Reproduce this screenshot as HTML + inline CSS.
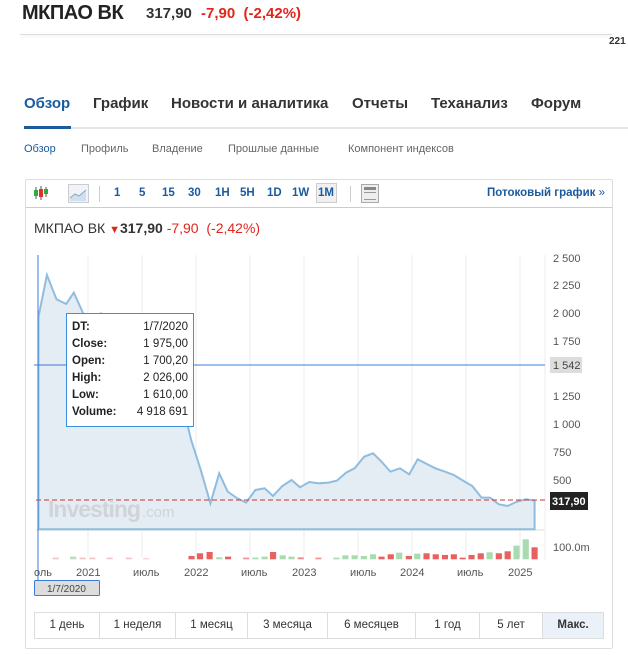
<!DOCTYPE html>
<html><head><meta charset="utf-8"><style>
*{margin:0;padding:0;box-sizing:border-box}
body{width:628px;height:655px;background:#fff;font-family:"Liberation Sans",sans-serif;position:relative;overflow:hidden;color:#222}
.a{position:absolute;white-space:nowrap}
</style></head><body>
<div class="a" style="left:22px;top:2px;font-size:20px;font-weight:bold;color:#222;letter-spacing:-0.5px">МКПАО ВК</div>
<div class="a" style="left:146px;top:5px;font-size:15px;font-weight:bold;color:#333">317,90</div>
<div class="a" style="left:201px;top:5px;font-size:15px;font-weight:bold;color:#e0251b">-7,90&nbsp; (-2,42%)</div>
<div class="a" style="left:20px;top:34px;width:592px;height:1px;background:#ddd;box-shadow:0 1px 3px rgba(0,0,0,.12)"></div>
<div class="a" style="left:609px;top:36px;font-size:10px;font-weight:bold;color:#333">221</div>

<div class="a" style="left:24px;top:95px;font-size:15px;font-weight:bold;color:#1a5a9e">Обзор</div>
<div class="a" style="left:93px;top:95px;font-size:15px;font-weight:bold;color:#333">График</div>
<div class="a" style="left:171px;top:95px;font-size:15px;font-weight:bold;color:#333">Новости и аналитика</div>
<div class="a" style="left:352px;top:95px;font-size:15px;font-weight:bold;color:#333">Отчеты</div>
<div class="a" style="left:431px;top:95px;font-size:15px;font-weight:bold;color:#333">Теханализ</div>
<div class="a" style="left:531px;top:95px;font-size:15px;font-weight:bold;color:#333">Форум</div>
<div class="a" style="left:24px;top:127px;width:604px;height:2px;background:#e3e6ea"></div>
<div class="a" style="left:24px;top:126px;width:47px;height:3px;background:#1a5a9e"></div>

<div class="a" style="left:24px;top:143px;font-size:11px;color:#1a5a9e">Обзор</div>
<div class="a" style="left:81px;top:143px;font-size:11px;color:#666">Профиль</div>
<div class="a" style="left:152px;top:143px;font-size:11px;color:#666">Владение</div>
<div class="a" style="left:228px;top:143px;font-size:11px;color:#666">Прошлые данные</div>
<div class="a" style="left:348px;top:143px;font-size:11px;color:#666">Компонент индексов</div>

<div class="a" style="left:25px;top:179px;width:588px;height:470px;border:1px solid #ddd;border-radius:2px"></div>
<div class="a" style="left:26px;top:207px;width:586px;height:1px;background:#ccc"></div>
<!-- toolbar -->
<svg class="a" style="left:33px;top:185px" width="16" height="16"><line x1="3" y1="2" x2="3" y2="14" stroke="#555"/><rect x="1" y="5" width="4" height="6" fill="#3a3"/><line x1="8" y1="1" x2="8" y2="15" stroke="#555"/><rect x="6" y="4" width="4" height="8" fill="#d33"/><line x1="13" y1="2" x2="13" y2="12" stroke="#555"/><rect x="11" y="4" width="4" height="5" fill="#3a3"/></svg>
<div class="a" style="left:68px;top:184px;width:21px;height:19px;border:1px solid #ccc;background:#f0f3f8"><svg width="19" height="17"><path d="M1 13 L6 9 L10 11 L17 5 L17 16 L1 16Z" fill="#cfe0f0"/><path d="M1 13 L6 9 L10 11 L17 5" stroke="#8ab" fill="none"/></svg></div>
<div class="a" style="left:99px;top:186px;width:1px;height:16px;background:#ccc"></div>
<div class="a" style="left:114px;top:187px;font-size:11.5px;font-weight:bold;color:#1a5a9e;word-spacing:0">1</div>
<div class="a" style="left:139px;top:187px;font-size:11.5px;font-weight:bold;color:#1a5a9e">5</div>
<div class="a" style="left:162px;top:187px;font-size:11.5px;font-weight:bold;color:#1a5a9e">15</div>
<div class="a" style="left:188px;top:187px;font-size:11.5px;font-weight:bold;color:#1a5a9e">30</div>
<div class="a" style="left:215px;top:187px;font-size:11.5px;font-weight:bold;color:#1a5a9e">1H</div>
<div class="a" style="left:240px;top:187px;font-size:11.5px;font-weight:bold;color:#1a5a9e">5H</div>
<div class="a" style="left:267px;top:187px;font-size:11.5px;font-weight:bold;color:#1a5a9e">1D</div>
<div class="a" style="left:292px;top:187px;font-size:11.5px;font-weight:bold;color:#1a5a9e">1W</div>
<div class="a" style="left:316px;top:183px;width:21px;height:20px;border:1px solid #ccc;background:#f0f0f0;font-size:11.5px;font-weight:bold;color:#1a5a9e;padding:3px 0 0 1px">1M</div>
<div class="a" style="left:350px;top:186px;width:1px;height:16px;background:#ccc"></div>
<div class="a" style="left:361px;top:184px;width:18px;height:19px;border:1px solid #aaa;background:#eee"><div style="margin:2px;height:3px;background:#888"></div><div style="margin:1px 2px;height:8px;border-top:1px solid #999;border-bottom:1px solid #999"></div></div>
<div class="a" style="left:487px;top:187px;font-size:11.5px;font-weight:bold;color:#1a5a9e">Потоковый график <span style="font-weight:normal">»</span></div>

<div class="a" style="left:34px;top:220px;font-size:14px;color:#333">МКПАО ВК <span style="color:#e0251b;font-size:11px">&#9660;</span><b>317,90</b> <span style="color:#e0251b">-7,90&nbsp; (-2,42%)</span></div>

<svg class="a" style="left:0;top:0" width="628" height="655">
<g stroke="#eee" stroke-width="1">
<line x1="88" y1="255" x2="88" y2="557"/><line x1="196" y1="255" x2="196" y2="557"/><line x1="304" y1="255" x2="304" y2="557"/><line x1="412" y1="255" x2="412" y2="557"/><line x1="520" y1="255" x2="520" y2="557"/>
<line x1="142" y1="255" x2="142" y2="557"/><line x1="250" y1="255" x2="250" y2="557"/><line x1="358" y1="255" x2="358" y2="557"/><line x1="466" y1="255" x2="466" y2="557"/>
</g>
<line x1="36" y1="530" x2="545" y2="530" stroke="#ddd"/>
<line x1="545" y1="255" x2="545" y2="560" stroke="#eee"/>
<g transform="translate(20,240) scale(0.3846,0.3333)">
<path d="M48 230 L70 105 L95 178 L120 192 L140 158 L165 222 L190 235 L210 220 L240 300 L280 330 L330 340 L380 390 L420 480 L445 600 L470 690 L495 790 L518 700 L540 755 L565 775 L588 788 L612 750 L636 745 L658 768 L682 738 L706 720 L728 742 L752 726 L778 730 L802 728 L824 722 L848 698 L870 685 L895 650 L918 640 L940 665 L963 695 L988 685 L1012 703 L1034 658 L1058 672 L1080 685 L1105 695 L1128 705 L1152 722 L1176 738 L1200 773 L1222 773 L1245 793 L1268 798 L1292 785 L1316 778 L1338 782 L1338 868 L48 868Z" fill="#e4ecf4" stroke="#8fbde0" stroke-width="2" vector-effect="non-scaling-stroke" />
<g fill="#e88">
<rect x="85" y="953" width="16" height="5" fill="#f4c4c4"/><rect x="130" y="950" width="16" height="8" fill="#b8e0bf"/><rect x="155" y="953" width="16" height="5" fill="#f4c4c4"/><rect x="180" y="953" width="16" height="5" fill="#f4c4c4"/><rect x="225" y="953" width="16" height="5" fill="#f4c4c4"/><rect x="275" y="953" width="16" height="5" fill="#f4c4c4"/><rect x="320" y="955" width="16" height="3" fill="#f4c4c4"/>
<rect x="438" y="948" width="16" height="10" fill="#e86060"/><rect x="460" y="940" width="16" height="18" fill="#e86060"/><rect x="485" y="936" width="16" height="22" fill="#e86060"/><rect x="510" y="952" width="16" height="6" fill="#a8dcb0"/><rect x="533" y="950" width="16" height="8" fill="#e86060"/><rect x="580" y="953" width="16" height="5" fill="#f09090"/><rect x="604" y="953" width="16" height="5" fill="#a8dcb0"/><rect x="628" y="950" width="16" height="8" fill="#a8dcb0"/><rect x="650" y="936" width="16" height="22" fill="#e86060"/><rect x="675" y="946" width="16" height="12" fill="#a8dcb0"/><rect x="698" y="950" width="16" height="8" fill="#a8dcb0"/><rect x="722" y="952" width="16" height="6" fill="#f09090"/><rect x="768" y="953" width="16" height="5" fill="#f09090"/><rect x="815" y="953" width="16" height="5" fill="#a8dcb0"/><rect x="838" y="946" width="16" height="12" fill="#a8dcb0"/><rect x="862" y="946" width="16" height="12" fill="#a8dcb0"/><rect x="886" y="948" width="16" height="10" fill="#a8dcb0"/><rect x="910" y="943" width="16" height="15" fill="#a8dcb0"/><rect x="932" y="950" width="16" height="8" fill="#e86060"/><rect x="956" y="943" width="16" height="15" fill="#e86060"/><rect x="978" y="938" width="16" height="20" fill="#a8dcb0"/><rect x="1003" y="948" width="16" height="10" fill="#e86060"/><rect x="1025" y="941" width="16" height="17" fill="#a8dcb0"/><rect x="1049" y="940" width="16" height="18" fill="#e86060"/><rect x="1073" y="943" width="16" height="15" fill="#e86060"/><rect x="1097" y="945" width="16" height="13" fill="#e86060"/><rect x="1120" y="943" width="16" height="15" fill="#e86060"/><rect x="1143" y="953" width="16" height="5" fill="#e86060"/><rect x="1166" y="945" width="16" height="13" fill="#e86060"/><rect x="1190" y="940" width="16" height="18" fill="#e86060"/><rect x="1213" y="937" width="16" height="21" fill="#a8dcb0"/><rect x="1237" y="940" width="16" height="18" fill="#e86060"/><rect x="1260" y="934" width="16" height="24" fill="#e86060"/><rect x="1283" y="917" width="16" height="41" fill="#a8dcb0"/><rect x="1307" y="898" width="16" height="60" fill="#a8dcb0"/><rect x="1330" y="922" width="16" height="36" fill="#e86060"/>
</g>
</g>
<line x1="36" y1="500" x2="545" y2="500" stroke="#c33" stroke-dasharray="5,3"/>
<line x1="34" y1="365" x2="545" y2="365" stroke="#3b7dd8"/>
<line x1="38" y1="255" x2="38" y2="580" stroke="#3b7dd8"/>
<text x="48" y="517" font-family="Liberation Sans" font-weight="bold" font-size="23" fill="#d0d4d8" letter-spacing="-1">Investing</text>
<text x="142" y="517" font-family="Liberation Sans" font-size="15" fill="#d0d4d8">.com</text>
<g font-family="Liberation Sans" font-size="11" fill="#555">
<text x="553" y="262">2 500</text><text x="553" y="289">2 250</text><text x="553" y="317">2 000</text><text x="553" y="345">1 750</text><text x="553" y="400">1 250</text><text x="553" y="428">1 000</text><text x="553" y="456">750</text><text x="553" y="484">500</text><text x="553" y="551">100.0m</text>
<text x="34" y="576">оль</text><text x="76" y="576">2021</text><text x="133" y="576">июль</text><text x="184" y="576">2022</text><text x="241" y="576">июль</text><text x="292" y="576">2023</text><text x="350" y="576">июль</text><text x="400" y="576">2024</text><text x="457" y="576">июль</text><text x="508" y="576">2025</text>
</g>
<rect x="550" y="357" width="32" height="16" fill="#ddd"/>
<text x="553" y="369" font-family="Liberation Sans" font-size="11" fill="#444">1 542</text>
<rect x="550" y="492" width="38" height="18" fill="#222"/>
<text x="552" y="505" font-family="Liberation Sans" font-size="11" font-weight="bold" fill="#fff">317,90</text>
<rect x="34.5" y="580.5" width="65" height="15" fill="#ddd" stroke="#3b7dd8" rx="1"/>
<text x="47" y="592" font-family="Liberation Sans" font-size="10" fill="#444">1/7/2020</text>
</svg>

<div class="a" style="left:66px;top:313px;width:128px;height:114px;border:1px solid #3b8fe0;background:#fff;font-size:11.5px;color:#222;padding:5px 5px 0 5px;line-height:17px">
<div style="display:flex;justify-content:space-between"><b>DT:</b><span>1/7/2020</span></div>
<div style="display:flex;justify-content:space-between"><b>Close:</b><span>1 975,00</span></div>
<div style="display:flex;justify-content:space-between"><b>Open:</b><span>1 700,20</span></div>
<div style="display:flex;justify-content:space-between"><b>High:</b><span>2 026,00</span></div>
<div style="display:flex;justify-content:space-between"><b>Low:</b><span>1 610,00</span></div>
<div style="display:flex;justify-content:space-between"><b>Volume:</b><span>4 918 691</span></div>
</div>

<div class="a" style="left:34px;top:612px;width:570px;height:27px;border:1px solid #ddd;display:flex;font-size:11.5px;color:#333">
<div style="width:65px;border-right:1px solid #ddd;text-align:center;line-height:25px">1 день</div>
<div style="width:76px;border-right:1px solid #ddd;text-align:center;line-height:25px">1 неделя</div>
<div style="width:72px;border-right:1px solid #ddd;text-align:center;line-height:25px">1 месяц</div>
<div style="width:80px;border-right:1px solid #ddd;text-align:center;line-height:25px">3 месяца</div>
<div style="width:88px;border-right:1px solid #ddd;text-align:center;line-height:25px">6 месяцев</div>
<div style="width:64px;border-right:1px solid #ddd;text-align:center;line-height:25px">1 год</div>
<div style="width:63px;border-right:1px solid #ddd;text-align:center;line-height:25px">5 лет</div>
<div style="flex:1;background:#eaf1f9;text-align:center;line-height:25px;font-weight:bold">Макс.</div>
</div>
</body></html>
